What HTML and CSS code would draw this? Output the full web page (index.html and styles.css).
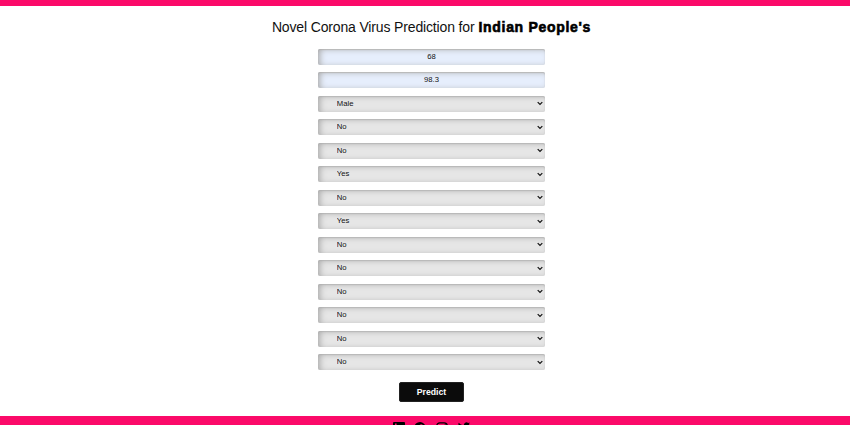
FILE: index.html
```html
<!DOCTYPE html>
<html lang="en">
<head>
<meta charset="utf-8">
<title>Novel Corona Virus Prediction</title>
<link rel="stylesheet" href="styles.css">
</head>
<body>
<header class="bar"></header>
<main class="content">
  <h1 class="title"><span class="lead">Novel Corona Virus Prediction for</span> <strong class="people">Indian People's</strong></h1>
  <form class="form">
    <input class="field filled" type="text" value="68">
    <input class="field filled" type="text" value="98.3">
    <div class="pick"><select class="field"><option>Male</option></select><svg class="chevron" viewBox="0 0 6 5"><path d="M.7 1.1 3 3.5 5.3 1.1"/></svg></div>
    <div class="pick"><select class="field"><option>No</option></select><svg class="chevron" viewBox="0 0 6 5"><path d="M.7 1.1 3 3.5 5.3 1.1"/></svg></div>
    <div class="pick"><select class="field"><option>No</option></select><svg class="chevron" viewBox="0 0 6 5"><path d="M.7 1.1 3 3.5 5.3 1.1"/></svg></div>
    <div class="pick"><select class="field"><option>Yes</option></select><svg class="chevron" viewBox="0 0 6 5"><path d="M.7 1.1 3 3.5 5.3 1.1"/></svg></div>
    <div class="pick"><select class="field"><option>No</option></select><svg class="chevron" viewBox="0 0 6 5"><path d="M.7 1.1 3 3.5 5.3 1.1"/></svg></div>
    <div class="pick"><select class="field"><option>Yes</option></select><svg class="chevron" viewBox="0 0 6 5"><path d="M.7 1.1 3 3.5 5.3 1.1"/></svg></div>
    <div class="pick"><select class="field"><option>No</option></select><svg class="chevron" viewBox="0 0 6 5"><path d="M.7 1.1 3 3.5 5.3 1.1"/></svg></div>
    <div class="pick"><select class="field"><option>No</option></select><svg class="chevron" viewBox="0 0 6 5"><path d="M.7 1.1 3 3.5 5.3 1.1"/></svg></div>
    <div class="pick"><select class="field"><option>No</option></select><svg class="chevron" viewBox="0 0 6 5"><path d="M.7 1.1 3 3.5 5.3 1.1"/></svg></div>
    <div class="pick"><select class="field"><option>No</option></select><svg class="chevron" viewBox="0 0 6 5"><path d="M.7 1.1 3 3.5 5.3 1.1"/></svg></div>
    <div class="pick"><select class="field"><option>No</option></select><svg class="chevron" viewBox="0 0 6 5"><path d="M.7 1.1 3 3.5 5.3 1.1"/></svg></div>
    <div class="pick"><select class="field"><option>No</option></select><svg class="chevron" viewBox="0 0 6 5"><path d="M.7 1.1 3 3.5 5.3 1.1"/></svg></div>
  </form>
  <button class="predict" type="button">Predict</button>
</main>
<footer class="footer">
  <svg class="icon" viewBox="0 0 12 12"><path fill-rule="evenodd" d="M1 0h10a1 1 0 0 1 1 1v10a1 1 0 0 1-1 1H1a1 1 0 0 1-1-1V1a1 1 0 0 1 1-1ZM2 4.5V10h1.6V4.5ZM2 1.500v1.500h1.6V1.500ZM5 4.5V10h1.6V7c0-1.6 2-1.6 2 0v3h1.6V6.6c0-2.4-2.5-2.8-3.6-1.3v-.8Z"/></svg>
  <svg class="icon" viewBox="0 0 12 12"><path d="M6 0a6 6 0 0 0-1 11.9V7.7H3.5V6H5V4.7C5 3.200 5.900 2.300 7.200 2.300l1.300.1v1.500h-.7c-.8 0-1 .4-1 .9V6h1.700l-.3 1.700H6.900v4.200A6 6 0 0 0 6 0Z"/></svg>
  <svg class="icon" viewBox="0 0 12 12"><g fill="none" stroke="#000" stroke-width="1.200"><rect x=".8" y=".8" width="10.400" height="10.400" rx="3"/><circle cx="6" cy="6" r="2.500"/></g><circle cx="9.200" cy="2.900" r=".7"/></svg>
  <svg class="icon" viewBox="0 0 12 12"><path d="M12 1.500l-1.300.4L11.700.500l-1.600.6A2.500 2.500 0 0 0 5.900 3.300 7 7 0 0 1 .8.700a2.500 2.500 0 0 0 .8 3.300L.5 3.700a2.500 2.500 0 0 0 2 2.400H1.400a2.500 2.500 0 0 0 2.300 1.700A5 5 0 0 1 0 8.900C5.500 12.100 11 8.200 10.800 2.800Z"/></svg>
</footer>
</body>
</html>
```
FILE: styles.css
```css
* {
  box-sizing: border-box;
}

body {
  margin: 0;
  height: 425px;
  overflow: hidden;
  background: #fff;
  font-family: "Liberation Sans", Arial, sans-serif;
}

.bar {
  height: 6px;
  background: #fb0a69;
}

.content {
  display: flex;
  flex-direction: column;
  align-items: center;
  height: 409.600px;
  padding: 12px 0 0 13px;
}

.title {
  display: flex;
  align-items: baseline;
  gap: 4px;
  margin: 0;
  height: 30.500px;
  font-size: 14px;
  font-weight: 400;
  line-height: 19px;
  letter-spacing: -.15px;
  white-space: nowrap;
  color: #111;
}

.people {
  font-size: 14px;
  font-weight: 700;
  letter-spacing: .7px;
  -webkit-text-stroke: .6px #000;
  color: #000;
}

.form {
  display: grid;
  gap: 7.500px;
  width: 227.500px;
}

.field {
  display: block;
  width: 100%;
  height: 16px;
  margin: 0;
  padding: 0 19px;
  border: 0;
  border-radius: 2px;
  appearance: none;
  background: #e6e6e6;
  box-shadow: inset 3px 1px 6px -1px #aaa, inset 0 1px 1px #c4c4c4;
  font: 7.700px/16px "Liberation Sans", Arial, sans-serif;
  color: #111;
}

.filled {
  background: #e6eefc;
  text-align: center;
}

.pick {
  display: grid;
  align-items: center;
}

.pick > * {
  grid-area: 1 / 1;
}

.chevron {
  justify-self: end;
  width: 6px;
  height: 5px;
  margin-right: 2px;
  fill: none;
  stroke: #111;
  stroke-width: 1.200;
  pointer-events: none;
}

.predict {
  width: 65px;
  height: 20px;
  margin-top: 12px;
  padding: 0;
  border: 1px solid #222;
  border-radius: 2px;
  background: #0b0b0b;
  color: #fff;
  font: bold 8.700px/18px "Liberation Sans", Arial, sans-serif;
}

.footer {
  display: flex;
  justify-content: center;
  gap: 9.800px;
  height: 20px;
  padding: 6.600px 0 0 12.500px;
  background: #fb0a69;
}

.icon {
  flex: none;
  width: 12px;
  height: 12px;
}
```
